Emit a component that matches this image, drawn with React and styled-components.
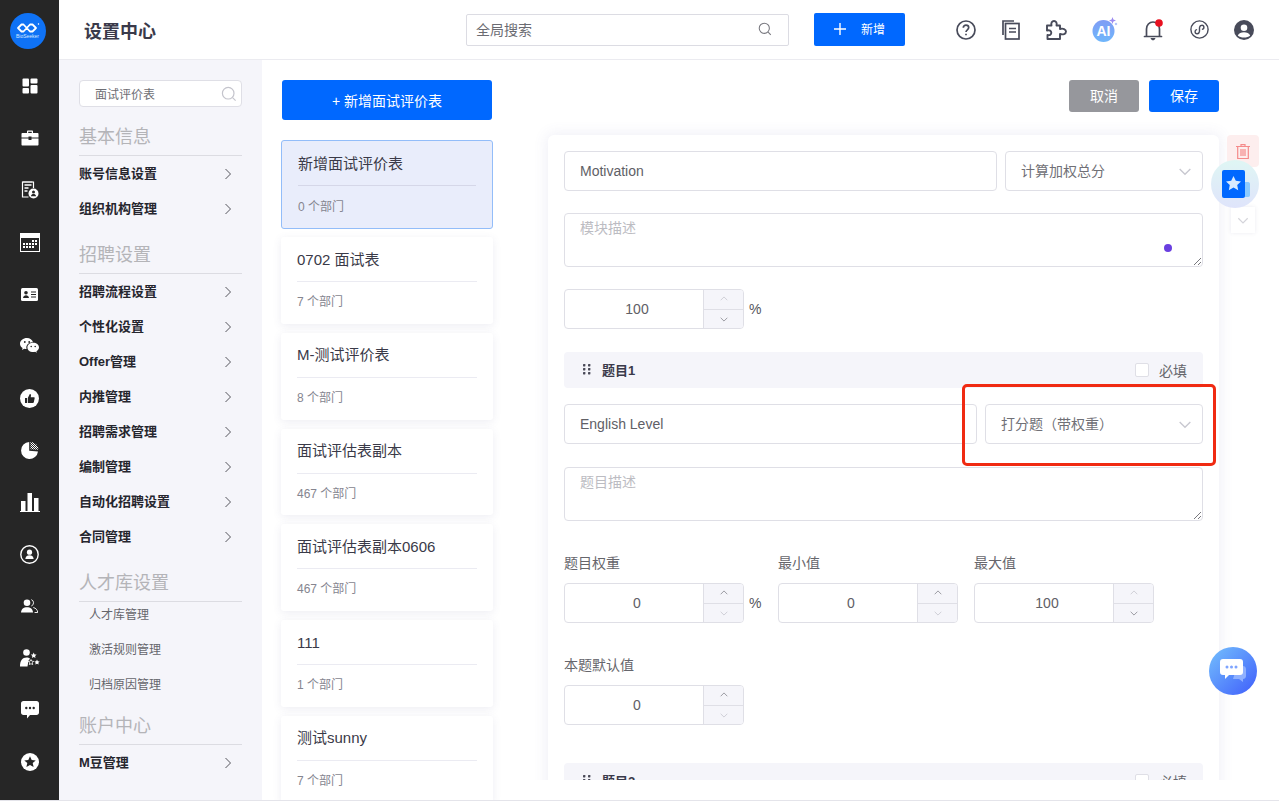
import React from 'react';
import styled, { createGlobalStyle } from 'styled-components';

const GlobalStyle = createGlobalStyle`
  html, body { margin: 0; padding: 0; }
  body {
    font-family: "Liberation Sans", "Noto Sans CJK SC", sans-serif;
    background: #ffffff;
    color: #3a3a4a;
  }
  * { box-sizing: border-box; }
`;

const Page = styled.div`
  position: relative;
  display: grid;
  grid-template-columns: 59px 1fr;
  width: 100vw;
  height: 100vh;
  overflow: hidden;
  border-bottom: 1px solid #e4e4ea;
`;

const Rail = styled.aside`
  display: flex;
  flex-direction: column;
  align-items: center;
  background: #262626;
`;

const LogoSlot = styled.div`
  display: flex;
  align-items: center;
  justify-content: center;
  height: 60px;
  width: 100%;
  padding: 2px 4px 0 0;
`;

const Logo = styled.div`
  display: flex;
  flex-direction: column;
  align-items: center;
  justify-content: center;
  width: 36px;
  height: 36px;
  padding-bottom: 2px;
  border-radius: 50%;
  background: #0f72f5;
`;

const LogoText = styled.span`
  font-size: 5px;
  line-height: 5px;
  color: #d8e8ff;
  white-space: nowrap;
`;

const RailItem = styled.div`
  display: flex;
  align-items: center;
  justify-content: center;
  width: 100%;
  height: 52px;
  flex: none;
`;

const Main = styled.div`
  display: flex;
  flex-direction: column;
  min-width: 0;
`;

const TopBar = styled.header`
  display: flex;
  align-items: center;
  height: 60px;
  flex: none;
  padding-left: 25px;
  border-bottom: 1px solid #ebebf0;
  background: #fff;
`;

const PageTitle = styled.h1`
  flex: none;
  width: 382px;
  margin: 0;
  font-size: 18px;
  font-weight: 700;
  color: #3a3a4a;
`;

const GlobalSearch = styled.div`
  display: flex;
  align-items: center;
  justify-content: space-between;
  flex: none;
  width: 323px;
  height: 32px;
  padding: 0 16px 2px 9px;
  border: 1px solid #dcdce3;
  border-radius: 2px;
  font-size: 14px;
  color: #6b6b72;
`;

const NewButton = styled.div`
  display: flex;
  align-items: center;
  justify-content: center;
  flex: none;
  gap: 15px;
  width: 91px;
  height: 33px;
  margin-left: 25px;
  padding-bottom: 2px;
  border-radius: 2px;
  background: #0068ff;
  font-size: 12px;
  color: #fff;
`;

const TopIcons = styled.div`
  display: flex;
  align-items: center;
  flex: none;
  margin-left: 48px;
`;

const TopIcon = styled.div`
  position: relative;
  display: flex;
  align-items: center;
  justify-content: center;
  width: 26px;
  height: 26px;
  margin-right: ${(p) => p.$gap}px;
  flex: none;
`;

const Body = styled.div`
  display: flex;
  flex: 1;
  min-height: 0;
`;

const SettingsNav = styled.nav`
  width: 203px;
  flex: none;
  padding: 20px 20px 0;
  background: #f5f5fa;
`;

const NavSearch = styled.div`
  display: flex;
  align-items: center;
  justify-content: space-between;
  height: 27px;
  padding: 0 4px 0 15px;
  border: 1px solid #dfdfe6;
  border-radius: 4px;
  background: #fff;
  font-size: 12px;
  color: #6e6e74;
`;

const NavTitle = styled.div`
  height: 39px;
  margin-top: 10px;
  padding-top: 8px;
  border-bottom: 1px solid #dcdce2;
  font-size: 18px;
  line-height: 24px;
  color: #b4b4b8;
`;

const NavItems = styled.div`
  margin-top: -1px;
`;

const NavItem = styled.div`
  display: flex;
  align-items: center;
  justify-content: space-between;
  height: 35px;
  padding-right: 8px;
  font-size: 13px;
  font-weight: 700;
  color: #26262e;
  svg {
    margin-top: 2px;
  }
`;

const SubList = styled.div`
  margin: -6px 0 -5px;
`;

const SubItem = styled.div`
  display: flex;
  align-items: center;
  height: 35px;
  padding-left: 10px;
  font-size: 12px;
  color: #66666c;
`;

const ListColumn = styled.section`
  width: 250px;
  flex: none;
  padding: 20px 20px 0;
  overflow: hidden;
`;

const AddButton = styled.div`
  display: flex;
  align-items: center;
  justify-content: center;
  height: 40px;
  padding-bottom: 1px;
  border-radius: 3px;
  background: #0068ff;
  font-size: 14px;
  color: #fff;
`;

const CardStack = styled.div`
  display: flex;
  flex-direction: column;
  gap: 9px;
  margin: 20px -1px 0;
`;

const Card = styled.div`
  flex: none;
  height: ${(p) => (p.$active ? '89px' : '86.8px')};
  margin-bottom: ${(p) => (p.$active ? '-1px' : '0')};
  padding: 0 16px;
  border-radius: 3px;
  border: ${(p) => (p.$active ? '1px solid #93bdf9' : 'none')};
  background: ${(p) => (p.$active ? '#e9edfb' : '#fff')};
  box-shadow: ${(p) => (p.$active ? 'none' : '0 2px 8px rgba(80, 80, 140, 0.1)')};
`;

const CardName = styled.div`
  height: 45px;
  padding-top: 11.500px;
  border-bottom: 1px solid ${(p) => (p.$active ? '#d5d7e8' : '#ebebf2')};
  font-size: 15px;
  line-height: 22px;
  color: #3a3a48;
`;

const CardMeta = styled.div`
  padding-top: ${(p) => (p.$active ? '12px' : '11px')};
  font-size: 12px;
  line-height: 18px;
  color: #85858f;
`;

const FormColumn = styled.section`
  display: flex;
  flex-direction: column;
  flex: 1;
  min-width: 0;
`;

const ActionBar = styled.div`
  display: flex;
  justify-content: flex-end;
  gap: 10px;
  height: 60px;
  flex: none;
  width: 707px;
  padding: 20px 0 0;
  background: #fff;
`;

const ActionButton = styled.div`
  display: flex;
  align-items: center;
  justify-content: center;
  width: 70px;
  height: 32px;
  padding-bottom: 2px;
  border-radius: 3px;
  background: ${(p) => (p.$primary ? '#0068ff' : '#96979c')};
  font-size: 14px;
  color: #fff;
`;

const FormClip = styled.div`
  width: 743px;
  height: 660px;
  padding: 15px 24px 0 36px;
  overflow: hidden;
`;

const FormPanel = styled.div`
  display: flex;
  flex-direction: column;
  width: 671px;
  padding: 16px;
  border-radius: 6px;
  background: #fff;
  box-shadow: 0 0 14px 2px rgba(90, 90, 170, 0.09);
`;

const FieldRow = styled.div`
  display: flex;
  gap: 8px;
  margin-top: ${(p) => p.$top || 0}px;
`;

const TextBox = styled.div`
  display: flex;
  align-items: center;
  flex: 1;
  height: 40px;
  padding: 0 15px;
  border: 1px solid #dfdfe6;
  border-radius: 4px;
  font-size: 14px;
  color: #606066;
`;

const SelectBox = styled(TextBox)`
  flex: none;
  width: ${(p) => p.$width}px;
  justify-content: space-between;
  padding: 0 9px 2px 15px;
  font-size: 14px;
  color: #707076;
  svg {
    margin-top: 2px;
  }
`;

const TextArea = styled.div`
  position: relative;
  height: 54px;
  margin-top: ${(p) => p.$top}px;
  padding: 4px 15px;
  border: 1px solid #dfdfe6;
  border-radius: 4px;
  font-size: 14px;
  line-height: 20px;
  color: #bcbcc2;
`;

const ResizeGrip = styled.svg`
  position: absolute;
  right: 1px;
  bottom: 1px;
`;

const PurpleDot = styled.span`
  position: absolute;
  right: 30px;
  top: 30px;
  width: 8px;
  height: 8px;
  border-radius: 50%;
  background: #6a3fe0;
`;

const NumberRow = styled.div`
  display: flex;
  align-items: flex-end;
  margin-top: ${(p) => p.$top}px;
`;

const NumberField = styled.div`
  display: flex;
  flex-direction: column;
  gap: 10px;
  margin-right: ${(p) => p.$gap || 0}px;
`;

const FieldLabel = styled.div`
  font-size: 14px;
  line-height: 20px;
  color: #66666c;
`;

const NumberLine = styled.div`
  display: flex;
  align-items: center;
`;

const NumberBox = styled.div`
  display: flex;
  width: 180px;
  height: 40px;
  border: 1px solid #dfdfe6;
  border-radius: 4px;
  overflow: hidden;
`;

const NumberValue = styled.div`
  display: flex;
  align-items: center;
  justify-content: center;
  flex: 1;
  padding-left: 6px;
  font-size: 14px;
  color: #606066;
`;

const Stepper = styled.div`
  display: flex;
  flex-direction: column;
  width: 40px;
  background: #f5f5fa;
  border-left: 1px solid #dfdfe6;
`;

const StepButton = styled.div`
  display: flex;
  align-items: center;
  justify-content: center;
  flex: 1;
  & + & {
    border-top: 1px solid #dfdfe6;
  }
`;

const Unit = styled.span`
  width: 18px;
  padding-left: 5px;
  font-size: 14px;
  color: #55555c;
`;

const QuestionBar = styled.div`
  display: flex;
  align-items: center;
  height: 36px;
  flex: none;
  margin-top: ${(p) => p.$top}px;
  padding: 0 16px 1px 19px;
  border-radius: 4px;
  background: #f5f5fa;
`;

const QuestionName = styled.span`
  flex: 1;
  margin-left: 11px;
  font-size: 13px;
  font-weight: 700;
  color: #3a3a4a;
`;

const CheckBox = styled.span`
  width: 14px;
  height: 14px;
  margin-right: 10px;
  border: 1px solid #dfdfe6;
  border-radius: 2px;
  background: #fff;
`;

const Required = styled.span`
  font-size: 14px;
  color: #66666c;
`;

const Highlight = styled.div`
  position: absolute;
  left: 962px;
  top: 384px;
  width: 254px;
  height: 82px;
  border: 3px solid #f02a12;
  border-radius: 5px;
  pointer-events: none;
`;

const TrashButton = styled.div`
  position: absolute;
  left: 1227px;
  top: 135px;
  display: flex;
  justify-content: center;
  padding-top: 9px;
  width: 32px;
  height: 32px;
  border-radius: 4px;
  background: #fdeeee;
`;

const DownTile = styled.div`
  position: absolute;
  left: 1231px;
  top: 207px;
  display: flex;
  align-items: center;
  justify-content: center;
  width: 24px;
  height: 26px;
  background: #fff;
  box-shadow: 0 0 4px rgba(90, 90, 140, 0.12);
`;

const StarBubble = styled.div`
  position: absolute;
  left: 1211px;
  top: 160px;
  display: flex;
  align-items: center;
  justify-content: center;
  width: 48px;
  height: 48px;
  border-radius: 50%;
  background: linear-gradient(180deg, #dff6f4 0%, #dfe4fb 100%);
`;

const ChatBubble = styled.div`
  position: absolute;
  left: 1209px;
  top: 647px;
  display: flex;
  align-items: center;
  justify-content: center;
  width: 48px;
  height: 48px;
  border-radius: 50%;
  background: linear-gradient(135deg, #74c0fd 0%, #3f5dfb 100%);
`;

const Chevron = ({ dir = 'down', size = 12, color = '#c8c8d0', width = 1 }) => {
  const paths = {
    down: 'M2 4.500l4 4 4-4',
    up: 'M2 7.500l4-4 4 4',
    right: 'M3.500 1l5 5-5 5',
  };
  return (
    <svg width={size} height={size} viewBox="0 0 12 12" fill="none" stroke={color} strokeWidth={width}>
      <path d={paths[dir]} />
    </svg>
  );
};

const SearchIcon = ({ size = 14, color = '#77777e' }) => (
  <svg width={size} height={size} viewBox="0 0 16 16" fill="none" stroke={color} strokeWidth="1.200">
    <circle cx="7.200" cy="7.200" r="5.800" />
    <path d="M11.600 11.600l3 3" />
  </svg>
);

const railIcons = [
  <svg key="a" width="16" height="16" viewBox="0 0 16 16" fill="#fff">
    <rect x="0.500" y="0.500" width="6.500" height="8" rx="1" />
    <rect x="8.500" y="0.500" width="7" height="5" rx="1" />
    <rect x="0.500" y="10" width="6.500" height="5.500" rx="1" />
    <rect x="8.500" y="7" width="7" height="8.500" rx="1" />
  </svg>,
  <svg key="b" width="18" height="16" viewBox="0 0 18 16" fill="#fff">
    <path d="M6 3V1.400C6 .8 6.500.5 7 .5h4c.6 0 1 .4 1 .9V3h-1.200V1.700H7.200V3z" />
    <path d="M1.300 3h15.400c.4 0 .8.300.8.800V7.500H10.500V6.500h-3v1H.5V3.800c0-.5.400-.8.800-.8z" />
    <path d="M.5 8.500h7v1.500h3V8.500h7v6c0 .6-.4 1-1 1h-15c-.6 0-1-.4-1-1z" />
  </svg>,
  <svg key="c" width="18" height="18" viewBox="0 0 18 18" fill="none">
    <path d="M11.500 1H1.500v15h6" stroke="#fff" strokeWidth="1.200" />
    <path d="M1.500 1h11v6" stroke="#fff" strokeWidth="1.200" />
    <path d="M3.500 4h7M3.500 7h4M3.500 10h3" stroke="#fff" strokeWidth="1.300" />
    <circle cx="12.500" cy="12.500" r="5" fill="#fff" />
    <circle cx="12.500" cy="11" r="1.500" fill="#262626" />
    <path d="M9.800 15.200c.5-1.600 1.500-2.200 2.700-2.200s2.200.600 2.700 2.200z" fill="#262626" />
  </svg>,
  <svg key="d" width="20" height="19" viewBox="0 0 20 19">
    <rect x=".5" y=".5" width="19" height="18" fill="none" stroke="#fff" />
    <rect x="1" y="1" width="18" height="4" fill="#fff" />
    <path d="M12 7h2v2h-2zM15 7h2v2h-2zM3 10h2v2H3zM6 10h2v2H6zM9 10h2v2H9zM12 10h2v2h-2zM15 10h2v2h-2zM3 13h2v2H3zM6 13h2v2H6zM9 13h2v2H9zM12 13h2v2h-2z" fill="#fff" />
  </svg>,
  <svg key="e" width="17" height="13" viewBox="0 0 17 13">
    <rect width="17" height="13" rx="1.500" fill="#fff" />
    <circle cx="5" cy="4.800" r="1.800" fill="#262626" />
    <path d="M2 10c.3-2 1.500-2.800 3-2.800S7.700 8 8 10z" fill="#262626" />
    <path d="M10 4h5M10 6.500h5M10 9h5" stroke="#262626" />
  </svg>,
  <svg key="f" width="19" height="16" viewBox="0 0 19 16" fill="#fff">
    <path d="M7 0C3.200 0 0 2.500 0 5.700c0 1.800 1 3.300 2.600 4.400L2 12l2.200-1.200c.7.200 1.500.300 2.400.300-.2-.5-.3-1-.3-1.600 0-3 2.900-5.300 6.300-5.300h.4C12.300 1.700 9.900 0 7 0z" />
    <path d="M19 9.400c0-2.600-2.600-4.700-5.800-4.700S7.400 6.800 7.400 9.400s2.600 4.700 5.800 4.700c.7 0 1.300-.1 1.900-.300l1.800 1-.5-1.600c1.600-1 2.600-2.300 2.600-3.800z" />
    <circle cx="4.800" cy="4" r=".9" fill="#262626" />
    <circle cx="9.200" cy="4" r=".9" fill="#262626" />
    <circle cx="11.200" cy="8.500" r=".8" fill="#262626" />
    <circle cx="15.200" cy="8.500" r=".8" fill="#262626" />
  </svg>,
  <svg key="g" width="19" height="19" viewBox="0 0 19 19">
    <circle cx="9.500" cy="9.500" r="9.500" fill="#fff" />
    <rect x="5" y="9" width="2" height="5" fill="#262626" />
    <path d="M7.800 9l2-4c.8 0 1.300.6 1.200 1.400L10.700 8.200H14c.5 0 .8.400.7.900l-.9 4.100c-.1.500-.4.800-.9.800H7.800z" fill="#262626" />
  </svg>,
  <svg key="h" width="18" height="18" viewBox="0 0 18 18">
    <defs>
      <pattern id="hatch" width="2" height="2" patternUnits="userSpaceOnUse">
        <rect width="2" height="2" fill="#262626" />
        <rect width="1" height="1" fill="#fff" />
        <rect x="1" y="1" width="1" height="1" fill="#fff" />
      </pattern>
    </defs>
    <path d="M8.200 1A8.500 8.500 0 1 0 17 10.500L8.200 9.800z" fill="#fff" />
    <path d="M9.500.8A8.500 8.500 0 0 1 17.500 8.800L9.500 8.300z" fill="url(#hatch)" />
  </svg>,
  <svg key="i" width="20" height="19" viewBox="0 0 20 19" fill="#fff">
    <rect x="1" y="8" width="4.500" height="10" />
    <rect x="7.500" y="0" width="4.500" height="18" />
    <rect x="14" y="5" width="4.500" height="13" />
    <rect y="18" width="20" height="1" />
  </svg>,
  <svg key="j" width="19" height="19" viewBox="0 0 19 19">
    <circle cx="9.500" cy="9.500" r="8.700" fill="none" stroke="#fff" strokeWidth="1.400" />
    <circle cx="9.500" cy="7.200" r="2.600" fill="#fff" />
    <path d="M5.300 14c.4-2.800 2-3.800 4.200-3.800s3.800 1 4.200 3.800z" fill="#fff" />
  </svg>,
  <svg key="k" width="17" height="14" viewBox="0 0 17 14" fill="#fff">
    <circle cx="6" cy="3.700" r="3.300" />
    <path d="M0 13.500c.3-3.700 2.500-5.300 6-5.300s5.700 1.600 6 5.300z" />
    <path d="M10.300.6a3.400 3.400 0 0 1 0 6.400M12.300 8.500c2.500.6 4.100 2.200 4.500 5h-3.200" stroke="#fff" strokeWidth=".9" fill="none" />
  </svg>,
  <svg key="l" width="20" height="18" viewBox="0 0 20 18" fill="#fff">
    <circle cx="6.500" cy="3.500" r="3.300" />
    <path d="M0 17.500c0-6 2.500-9 6.500-9 1.500 0 2.800.4 3.600 1.200L8.500 11.500l-1 6z" />
    <path d="M13.700 3.500l.9 1.900 2 .2-1.500 1.400.4 2-1.800-1-1.800 1 .4-2-1.500-1.400 2-.2z" />
    <path d="M11 10.500l.8 1.700 1.900.2-1.400 1.300.4 1.900-1.700-.9-1.700.9.400-1.900-1.400-1.300 1.900-.2z" fill="none" stroke="#fff" strokeWidth=".8" />
    <path d="M17 10.500l.8 1.700 1.900.2-1.400 1.300.4 1.900-1.700-.9-1.700.9.400-1.900-1.400-1.300 1.900-.2z" />
  </svg>,
  <svg key="m" width="18" height="18" viewBox="0 0 18 18">
    <path d="M2.500 0h13C17 0 18 1 18 2.500v9c0 1.500-1 2.500-2.500 2.500H9l-3 3.500V14H2.500C1 14 0 13 0 11.500v-9C0 1 1 0 2.500 0z" fill="#fff" />
    <circle cx="5.300" cy="7" r="1.200" fill="#262626" />
    <circle cx="9" cy="7" r="1.200" fill="#262626" />
    <circle cx="12.700" cy="7" r="1.200" fill="#262626" />
  </svg>,
  <svg key="n" width="18" height="18" viewBox="0 0 18 18">
    <circle cx="9" cy="9" r="9" fill="#fff" />
    <path d="M9 3.300l1.700 3.700 4 .4-3 2.700.9 4L9 12.100l-3.600 2 .9-4-3-2.700 4-.4z" fill="#262626" />
  </svg>,
];

const QuestionMark = () => (
  <svg width="20" height="20" viewBox="0 0 20 20" fill="none" stroke="#484b5a" strokeWidth="1.700">
    <circle cx="10" cy="10" r="9" />
    <path d="M7.300 7.800C7.300 6.200 8.500 5.200 10 5.200s2.700 1 2.700 2.400c0 2.200-2.700 2.200-2.700 4.400" />
    <path d="M10 13.700v1.600" />
  </svg>
);

const DocsIcon = () => (
  <svg width="18" height="20" viewBox="0 0 18 20" fill="none" stroke="#484b5a" strokeWidth="1.700">
    <path d="M1 15V1h11" />
    <rect x="3.500" y="3.500" width="13.500" height="15.500" />
    <path d="M7 8.500h7M7 12h7" />
  </svg>
);

const PluginIcon = () => (
  <svg width="21" height="20" viewBox="0 0 21 20" fill="none" stroke="#484b5a" strokeWidth="1.900" strokeLinejoin="round">
    <path d="M1 5.500h4.500C4.800 2.800 6 1 8 1s3.200 1.800 2.500 4.500H14V9c3-1 6 .3 6 2.600S17 15 14 14V19H1.500v-4c2.500.6 3.800-.6 3.800-2.300S3.500 9.800 1 10.500z" />
  </svg>
);

const AiBadge = () => (
  <svg width="26" height="26" viewBox="0 0 26 26">
    <defs>
      <linearGradient id="aiFill" x1="0" y1="0" x2="0" y2="1">
        <stop offset="0" stopColor="#7f9df5" />
        <stop offset="1" stopColor="#6fb6fb" />
      </linearGradient>
    </defs>
    <circle cx="11.500" cy="14" r="11" fill="url(#aiFill)" />
    <path d="M20.500 0l.9 2.600 2.600.9-2.600.9-.9 2.600-.9-2.600L17 3.500l2.600-.9z" fill="#9d8cf0" />
    <path d="M24 5.500l.4 1.100 1.100.4-1.100.4-.4 1.100-.4-1.100-1.100-.4 1.100-.4z" fill="#7f9df5" />
    <text x="11.500" y="19" textAnchor="middle" fontSize="14" fontWeight="700" fill="#fff" fontFamily="Liberation Sans">AI</text>
  </svg>
);

const BellIcon = () => (
  <svg width="22" height="22" viewBox="0 0 22 22" fill="none">
    <path d="M1.500 17.500h17" stroke="#484b5a" strokeWidth="1.700" strokeLinecap="round" />
    <path d="M3.500 17.500V10c0-4 2.800-7 6.500-7s6.500 3 6.500 7v7.500" stroke="#484b5a" strokeWidth="1.700" />
    <path d="M7.500 19c.5 1.700 1.500 2.300 2.500 2.300s2-.6 2.500-2.300z" fill="#484b5a" />
    <circle cx="16" cy="4" r="3.800" fill="#e8101f" />
  </svg>
);

const LinkIcon = () => (
  <svg width="19" height="19" viewBox="0 0 19 19" fill="none" stroke="#484b5a" strokeWidth="1.400">
    <circle cx="9.500" cy="9.500" r="8.600" />
    <path d="M9.500 7.500c.3-1.500 1.200-2.200 2.300-2.200a2 2 0 0 1 .1 4.100M9.500 11.500c-.3 1.500-1.200 2.200-2.300 2.200a2 2 0 0 1-.1-4.100M9.500 7.500v4" />
  </svg>
);

const UserIcon = () => (
  <svg width="20" height="20" viewBox="0 0 20 20">
    <circle cx="10" cy="10" r="10" fill="#484b5a" />
    <circle cx="10" cy="7.700" r="3.300" fill="#fff" />
    <path d="M3.800 15.600c1-2.500 3.400-3.400 6.200-3.400s5.200.9 6.200 3.400c-1.500 1.400-3.800 2-6.200 2s-4.700-.6-6.200-2z" fill="#fff" />
  </svg>
);

const DragDots = () => (
  <svg width="8" height="11" viewBox="0 0 8 11" fill="#4a4a58">
    {[0, 4, 8].map((y) =>
      [0, 5].map((x) => <rect key={`${x}-${y}`} x={x} y={y} width="2.400" height="2.400" rx=".6" />)
    )}
  </svg>
);

const Grip = () => (
  <ResizeGrip width="8" height="8" viewBox="0 0 8 8" stroke="#55555c" strokeWidth=".8">
    <path d="M1 8l7-7M5 8l3-3" />
  </ResizeGrip>
);

const Number = ({ value, upDim = true, downDim = false }) => (
  <NumberBox>
    <NumberValue>{value}</NumberValue>
    <Stepper>
      <StepButton>
        <Chevron dir="up" size={10} color={upDim ? '#c8c8d0' : '#8a8a92'} />
      </StepButton>
      <StepButton>
        <Chevron dir="down" size={10} color={downDim ? '#c8c8d0' : '#8a8a92'} />
      </StepButton>
    </Stepper>
  </NumberBox>
);

const navGroups = [
  { title: '基本信息', items: ['账号信息设置', '组织机构管理'] },
  {
    title: '招聘设置',
    items: ['招聘流程设置', '个性化设置', 'Offer管理', '内推管理', '招聘需求管理', '编制管理', '自动化招聘设置', '合同管理'],
  },
  { title: '人才库设置', sub: ['人才库管理', '激活规则管理', '归档原因管理'] },
  { title: '账户中心', items: ['M豆管理'] },
];

const cards = [
  { name: '新增面试评价表', meta: '0 个部门', active: true },
  { name: '0702 面试表', meta: '7 个部门' },
  { name: 'M-测试评价表', meta: '8 个部门' },
  { name: '面试评估表副本', meta: '467 个部门' },
  { name: '面试评估表副本0606', meta: '467 个部门' },
  { name: '111', meta: '1 个部门' },
  { name: '测试sunny', meta: '7 个部门' },
];

export default function App() {
  return (
    <Page>
      <GlobalStyle />
      <Rail>
        <LogoSlot>
          <Logo>
            <svg width="24" height="12" viewBox="0 0 24 12" fill="none" stroke="#fff" strokeWidth="1.800" strokeLinejoin="round">
              <path d="M2 6l3.500-3.500h2L14 9.500h2.500L20 6l-3.500-3.500H14L7.500 9.500h-2z" />
              <circle cx="22.500" cy="2" r=".4" strokeWidth="1" />
            </svg>
            <LogoText>BioSeeker</LogoText>
          </Logo>
        </LogoSlot>
        {railIcons.map((icon) => (
          <RailItem key={icon.key}>{icon}</RailItem>
        ))}
      </Rail>

      <Main>
        <TopBar>
          <PageTitle>设置中心</PageTitle>
          <GlobalSearch>
            全局搜索
            <SearchIcon />
          </GlobalSearch>
          <NewButton>
            <svg width="12" height="12" viewBox="0 0 12 12" stroke="#fff" strokeWidth="1.400">
              <path d="M6 0v12M0 6h12" />
            </svg>
            新增
          </NewButton>
          <TopIcons>
            <TopIcon $gap={19}><QuestionMark /></TopIcon>
            <TopIcon $gap={19}><DocsIcon /></TopIcon>
            <TopIcon $gap={22.5}><PluginIcon /></TopIcon>
            <TopIcon $gap={23.5}><AiBadge /></TopIcon>
            <TopIcon $gap={19}><BellIcon /></TopIcon>
            <TopIcon $gap={19}><LinkIcon /></TopIcon>
            <TopIcon $gap={0}><UserIcon /></TopIcon>
          </TopIcons>
        </TopBar>

        <Body>
          <SettingsNav>
            <NavSearch>
              面试评价表
              <SearchIcon size={16} color="#c4c4cc" />
            </NavSearch>
            {navGroups.map((group) => (
              <div key={group.title}>
                <NavTitle>{group.title}</NavTitle>
                {group.items && (
                  <NavItems>
                    {group.items.map((item) => (
                      <NavItem key={item}>
                        {item}
                        <Chevron dir="right" size={12} color="#55555c" />
                      </NavItem>
                    ))}
                  </NavItems>
                )}
                {group.sub && (
                  <SubList>
                    {group.sub.map((item) => (
                      <SubItem key={item}>{item}</SubItem>
                    ))}
                  </SubList>
                )}
              </div>
            ))}
          </SettingsNav>

          <ListColumn>
            <AddButton>+ 新增面试评价表</AddButton>
            <CardStack>
              {cards.map((card) => (
                <Card key={card.name} $active={card.active}>
                  <CardName $active={card.active}>{card.name}</CardName>
                  <CardMeta $active={card.active}>{card.meta}</CardMeta>
                </Card>
              ))}
            </CardStack>
          </ListColumn>

          <FormColumn>
            <ActionBar>
              <ActionButton>取消</ActionButton>
              <ActionButton $primary>保存</ActionButton>
            </ActionBar>
            <FormClip>
              <FormPanel>
                <FieldRow>
                  <TextBox>Motivation</TextBox>
                  <SelectBox $width={198}>
                    计算加权总分
                    <Chevron size={16} />
                  </SelectBox>
                </FieldRow>
                <TextArea $top={22}>
                  模块描述
                  <PurpleDot />
                  <Grip />
                </TextArea>
                <NumberRow $top={22}>
                  <NumberLine>
                    <Number value="100" upDim />
                    <Unit>%</Unit>
                  </NumberLine>
                </NumberRow>

                <QuestionBar $top={23}>
                  <DragDots />
                  <QuestionName>题目1</QuestionName>
                  <CheckBox />
                  <Required>必填</Required>
                </QuestionBar>
                <FieldRow $top={16}>
                  <TextBox>English Level</TextBox>
                  <SelectBox $width={218}>
                    打分题（带权重）
                    <Chevron size={16} />
                  </SelectBox>
                </FieldRow>
                <TextArea $top={23}>
                  题目描述
                  <Grip />
                </TextArea>
                <NumberRow $top={32}>
                  <NumberField $gap={16}>
                    <FieldLabel>题目权重</FieldLabel>
                    <NumberLine>
                      <Number value="0" upDim={false} downDim />
                      <Unit>%</Unit>
                    </NumberLine>
                  </NumberField>
                  <NumberField $gap={16}>
                    <FieldLabel>最小值</FieldLabel>
                    <Number value="0" upDim={false} downDim />
                  </NumberField>
                  <NumberField>
                    <FieldLabel>最大值</FieldLabel>
                    <Number value="100" upDim />
                  </NumberField>
                </NumberRow>
                <NumberRow $top={32}>
                  <NumberField>
                    <FieldLabel>本题默认值</FieldLabel>
                    <Number value="0" upDim={false} downDim />
                  </NumberField>
                </NumberRow>

                <QuestionBar $top={38}>
                  <DragDots />
                  <QuestionName>题目2</QuestionName>
                  <CheckBox />
                  <Required>必填</Required>
                </QuestionBar>
              </FormPanel>
            </FormClip>
          </FormColumn>
        </Body>
      </Main>

      <Highlight />
      <TrashButton>
        <svg width="14" height="15" viewBox="0 0 14 15" fill="none" stroke="#f58a8a" strokeWidth="1.200">
          <path d="M0 2.500h14M5 2.500V.7h4v1.800M1.700 2.500v12h10.600v-12M5 5v7M7 5v7M9 5v7" />
        </svg>
      </TrashButton>
      <DownTile>
        <Chevron size={14} color="#d4d4da" />
      </DownTile>
      <StarBubble>
        <svg width="30" height="30" viewBox="0 0 30 30">
          <path d="M20 13h8c1.500 0 2 1 2 2v11c0 1-.5 2-2 2h-8z" fill="#8ccbff" />
          <rect x="2" y="1" width="23" height="28" rx="2" fill="#0068ff" />
          <path d="M13.500 7l2.300 4.800 5.200.7-3.800 3.500 1 5.200-4.700-2.600-4.700 2.600 1-5.200-3.800-3.500 5.200-.7z" fill="#d8eaff" />
        </svg>
      </StarBubble>
      <ChatBubble>
        <svg width="28" height="26" viewBox="0 0 28 26">
          <path d="M18 8h6c1.500 0 3 1 3 3v7c0 2-1.500 3-3 3v3l-4-3h-6z" fill="#8fb0ff" />
          <path d="M4 1h17c2 0 3 1 3 3v10c0 2-1 3-3 3H10l-4 4v-4H4c-2 0-3-1-3-3V4c0-2 1-3 3-3z" fill="#fff" />
          <circle cx="8" cy="9" r="1.500" fill="#7ea4ff" />
          <circle cx="12.500" cy="9" r="1.500" fill="#7ea4ff" />
          <circle cx="17" cy="9" r="1.500" fill="#7ea4ff" />
        </svg>
      </ChatBubble>
    </Page>
  );
}
